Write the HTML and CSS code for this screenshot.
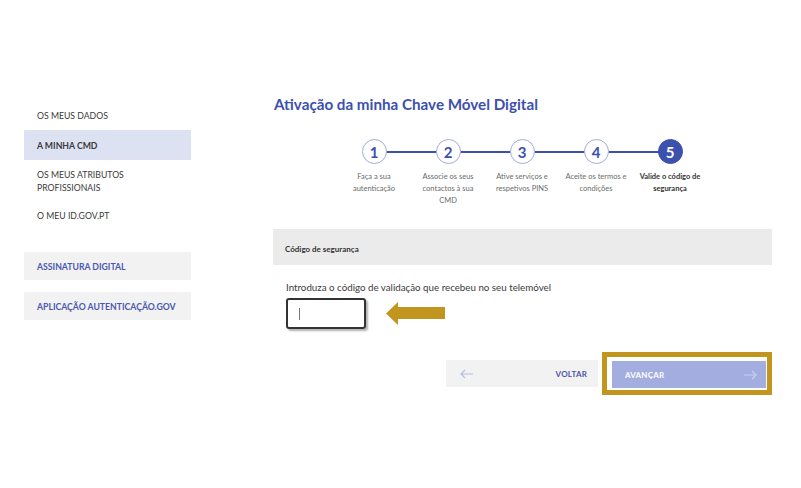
FILE: index.html
```html
<!DOCTYPE html>
<html lang="pt">
<head>
<meta charset="utf-8">
<title>Ativação da minha Chave Móvel Digital</title>
<link rel="stylesheet" href="styles.css">
</head>
<body>
<div class="page">
  <nav class="sidebar">
    <ul class="menu">
      <li class="menu-item">OS MEUS DADOS</li>
      <li class="menu-item active">A MINHA CMD</li>
      <li class="menu-item">OS MEUS ATRIBUTOS<br>PROFISSIONAIS</li>
      <li class="menu-item">O MEU ID.GOV.PT</li>
    </ul>
    <div class="side-box">ASSINATURA DIGITAL</div>
    <div class="side-box">APLICAÇÃO AUTENTICAÇÃO.GOV</div>
  </nav>
  <main class="main">
    <h1 class="title">Ativação da minha Chave Móvel Digital</h1>
    <ol class="stepper">
      <li class="step"><span class="circle">1</span><span class="label">Faça a sua<br>autenticação</span></li>
      <li class="step"><span class="circle">2</span><span class="label">Associe os seus<br>contactos à sua<br>CMD</span></li>
      <li class="step"><span class="circle">3</span><span class="label">Ative serviços e<br>respetivos PINS</span></li>
      <li class="step"><span class="circle">4</span><span class="label">Aceite os termos e<br>condições</span></li>
      <li class="step current"><span class="circle">5</span><span class="label">Valide o código de<br>segurança</span></li>
    </ol>
    <div class="section-head">Código de segurança</div>
    <div class="section-body">
      <p class="intro">Introduza o código de validação que recebeu no seu telemóvel</p>
      <div class="input-row">
        <div class="code-input"><span class="caret"></span></div>
        <svg class="gold-arrow" width="60" height="23" viewBox="0 0 60 23"><path d="M0 11.5 L12 0 L12 5 L59 5 L59 17 L12 17 L12 23 Z" fill="#c2961e"/></svg>
      </div>
    </div>
    <div class="actions">
      <button class="btn btn-back">
        <svg width="14" height="10" viewBox="0 0 14 10"><path d="M13 5 H1 M5 1 L1 5 L5 9" fill="none" stroke="#b6bbe8" stroke-width="1.2"/></svg>
        <span>VOLTAR</span>
      </button>
      <div class="highlight">
        <button class="btn btn-next">
          <span>AVANÇAR</span>
          <svg width="14" height="10" viewBox="0 0 14 10"><path d="M1 5 H13 M9 1 L13 5 L9 9" fill="none" stroke="#c9cdf0" stroke-width="1.2"/></svg>
        </button>
      </div>
    </div>
  </main>
</div>
</body>
</html>
```
FILE: styles.css
```css
* { box-sizing: border-box; }
html, body { margin: 0; padding: 0; background: #fff; }
body { font-family: Lato, "Open Sans", Arial, sans-serif; color: #333; }

.page {
  display: flex;
  padding: 94px 0 0 24px;
  width: 801px;
  height: 488px;
}

.sidebar { width: 167px; margin-top: 7px; }
.menu { list-style: none; margin: 0 0 22px; padding: 0; }
.menu-item {
  font-size: 8.7px;
  line-height: 13px;
  padding: 8px 13px;
  color: #3a3a3a;
}
.menu-item.active {
  background: #dde2f2;
  font-weight: 700;
  padding-top: 9px;
  padding-bottom: 8px;
}
.menu-item:nth-child(3) { padding-top: 8px; padding-bottom: 7px; }
.side-box {
  background: #f2f2f2;
  height: 28px;
  display: flex;
  align-items: center;
  padding-left: 13px;
  font-size: 8.7px;
  font-weight: 700;
  color: #4b58b0;
  margin-bottom: 12px;
}

.main { margin-left: 82px; width: 499px; }
.title {
  margin: 0;
  padding-left: 1px;
  font-size: 15.2px;
  line-height: 20px;
  font-weight: 700;
  color: #3c50ad;
}

.stepper {
  list-style: none;
  margin: 25px 0 0 64px;
  padding: 0;
  display: flex;
  height: 71px;
}
.step {
  width: 74px;
  display: flex;
  flex-direction: column;
  align-items: center;
  position: relative;
}
.step + .step::before {
  content: "";
  position: absolute;
  left: -37px;
  width: 74px;
  top: 12px;
  height: 1.5px;
  background: #3c50ad;
  z-index: 0;
}
.circle {
  position: relative;
  z-index: 1;
  width: 25px;
  height: 25px;
  border-radius: 50%;
  border: 1.5px solid #a4acdc;
  background: #fff;
  color: #3c50ad;
  font-size: 15px;
  font-weight: 700;
  display: flex;
  align-items: center;
  justify-content: center;
}
.step.current .circle { background: #3c50ad; border-color: #3c50ad; color: #fff; }
.label {
  margin-top: 7px;
  font-size: 7.5px;
  line-height: 12px;
  text-align: center;
  color: #6b6b6b;
  white-space: nowrap;
}
.step.current .label { color: #333; font-weight: 700; }

.section-head {
  margin-top: 19px;
  height: 36px;
  background: #ebebeb;
  display: flex;
  align-items: center;
  padding: 4px 0 0 12px;
  font-size: 8px;
  font-weight: 700;
  color: #333;
}
.section-body { padding-left: 13px; }
.intro {
  margin: 15px 0 4px;
  font-size: 9.75px;
  line-height: 14px;
  color: #3a3a3a;
}
.input-row { display: flex; align-items: center; gap: 20px; }
.code-input {
  width: 80px;
  height: 31px;
  border: 2px solid #333;
  border-radius: 3px;
  box-shadow: 2px 2px 2px rgba(0,0,0,0.3);
  display: flex;
  align-items: center;
  padding-left: 11px;
}
.caret { width: 1px; height: 12px; background: #777; }
.gold-arrow { display: block; }

.actions {
  margin-top: 23px;
  display: flex;
  justify-content: flex-end;
  align-items: center;
  gap: 4px;
}
.btn {
  border: none;
  height: 27px;
  width: 152px;
  display: flex;
  align-items: center;
  justify-content: space-between;
  font-family: Lato, Arial, sans-serif;
  font-size: 8px;
  font-weight: 700;
  letter-spacing: 0.2px;
  cursor: pointer;
}
.btn-back { background: #f2f2f2; color: #4a56a8; padding: 0 11px 0 14px; }
.highlight {
  border: 5px solid #c2961e;
  padding: 4px 1px 2px 5px;
  background: #fff;
}
.btn-next { width: 154px; background: #a4addf; color: #fff; padding: 0 9px 0 13px; }
```
